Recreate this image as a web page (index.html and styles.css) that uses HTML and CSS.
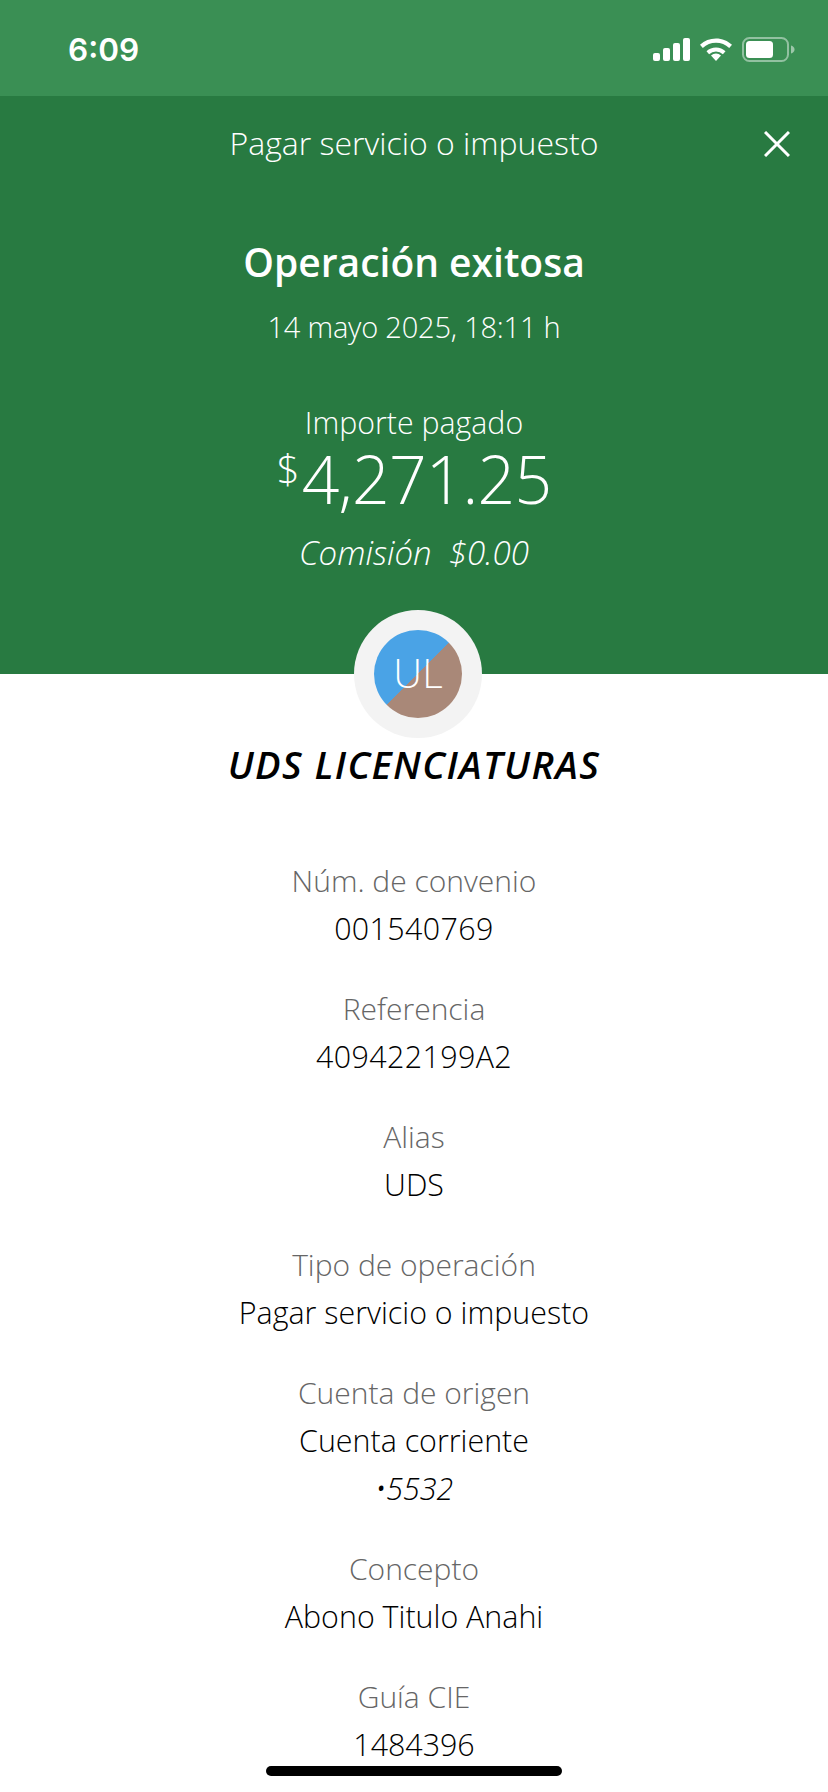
FILE: index.html
```html
<!DOCTYPE html>
<html lang="es">
<head>
<meta charset="utf-8">
<title>Operación exitosa</title>
<link rel="stylesheet" href="styles.css">
</head>
<body>
<div class="page">
  <div class="status">
    <span class="time">6:09</span>
    <div class="status-icons">
      <svg class="ic-signal" width="37" height="23" viewBox="0 0 37 23"><rect x="0" y="15" width="7" height="8" rx="2"/><rect x="10" y="10" width="7" height="13" rx="2"/><rect x="20" y="5" width="7" height="18" rx="2"/><rect x="30" y="0" width="7" height="23" rx="2"/></svg>
      <svg class="ic-wifi" width="32" height="23" viewBox="0 0 32 23"><path d="M16 23l-5-5.6a7.4 7.4 0 0 1 10 0z"/><path d="M16 9.6c3.7 0 7 1.4 9.500 3.700l-2.600 2.900a10.200 10.200 0 0 0-13.800 0l-2.600-2.900A14 14 0 0 1 16 9.600z"/><path d="M16 0.500c6.200 0 11.800 2.400 16 6.300l-2.800 3.100A19.600 19.600 0 0 0 16 4.700 19.600 19.600 0 0 0 2.800 9.900L0 6.800A23.600 23.600 0 0 1 16 0.500z"/></svg>
      <svg class="ic-batt" width="53" height="25" viewBox="0 0 53 25"><rect class="batt-frame" x="1" y="1" width="45" height="23" rx="6.500"/><rect x="4" y="4" width="27" height="17" rx="3.500"/><path class="batt-nub" d="M49 8.500c2 .6 3.500 2 3.500 4s-1.500 3.400-3.500 4z"/></svg>
    </div>
  </div>

  <header class="hero">
    <div class="nav">
      <span class="nav-title">Pagar servicio o impuesto</span>
      <svg class="close" width="26" height="26" viewBox="0 0 26 26"><path d="M1 1l24 24M25 1L1 25"/></svg>
    </div>
    <h1 class="headline">Operación exitosa</h1>
    <p class="date">14 mayo 2025, 18:11 h</p>
    <p class="paid-label">Importe pagado</p>
    <p class="amount"><span class="cur">$</span>4,271.25</p>
    <p class="fee">Comisión&nbsp; $0.00</p>
  </header>

  <div class="avatar">
    <div class="avatar-disc">UL</div>
  </div>
  <h2 class="name">UDS LICENCIATURAS</h2>

  <main class="details">
    <div class="row"><span class="lbl">Núm. de convenio</span><span class="val val-num">001540769</span></div>
    <div class="row"><span class="lbl">Referencia</span><span class="val val-num">409422199A2</span></div>
    <div class="row"><span class="lbl">Alias</span><span class="val">UDS</span></div>
    <div class="row"><span class="lbl">Tipo de operación</span><span class="val">Pagar servicio o impuesto</span></div>
    <div class="row"><span class="lbl">Cuenta de origen</span><span class="val">Cuenta corriente</span><span class="val val-it">•5532</span></div>
    <div class="row"><span class="lbl">Concepto</span><span class="val">Abono Titulo Anahi</span></div>
    <div class="row"><span class="lbl">Guía CIE</span><span class="val">1484396</span></div>
  </main>

  <div class="home-bar"></div>
</div>
</body>
</html>
```
FILE: styles.css
```css
* { box-sizing: border-box; }
html, body { margin: 0; padding: 0; background: #fff; }
.page {
  position: relative;
  width: 828px;
  height: 1792px;
  overflow: hidden;
  font-family: "Open Sans", "Liberation Sans", sans-serif;
  font-weight: 300;
  text-align: center;
  color: #000;
}
p, h1, h2 { margin: 0; font-weight: inherit; }

.status {
  height: 96px;
  background: #3a8f54;
  display: flex;
  align-items: center;
  justify-content: space-between;
  padding: 0 33px 0 68px;
  color: #fff;
}
.time { font-family: Inter, sans-serif; font-size: 31.500px; font-weight: 600; line-height: 1; margin-top: 3px; }
.status-icons { display: flex; align-items: center; gap: 10px; fill: #fff; margin-top: 2px; }
.batt-frame { fill: none; stroke: #fff; stroke-opacity: .45; stroke-width: 2; }
.batt-nub { fill-opacity: .5; }

.hero {
  height: 578px;
  background: #287a41;
  color: #fff;
  overflow: hidden;
}
.nav {
  position: relative;
  height: 96px;
  display: flex;
  align-items: center;
  justify-content: center;
}
.nav-title { font-size: 32px; margin-top: -4px; }
.close {
  position: absolute;
  right: 38px;
  top: 35px;
  fill: none;
  stroke: #fff;
  stroke-width: 3;
}
.headline { margin-top: 46px; font-size: 39px; line-height: 48px; font-weight: 600; }
.date { margin-top: 17px; font-size: 29px; line-height: 48px; letter-spacing: -0.2px; }
.paid-label { margin-top: 48px; font-size: 30.300px; line-height: 48px; }
.amount { font-size: 66px; line-height: 62px; letter-spacing: -0.8px; }
.cur { font-size: 40px; position: relative; top: -20px; margin-right: 3px; }
.fee { margin-top: 9px; font-size: 33px; line-height: 48px; font-style: italic; }

.avatar {
  width: 128px;
  height: 128px;
  margin: -64px 0 0 354px;
  position: relative;
  border-radius: 50%;
  background: #f3f3f3;
  display: flex;
  align-items: center;
  justify-content: center;
}
.avatar-disc {
  width: 88px;
  height: 88px;
  border-radius: 50%;
  background: linear-gradient(135deg, #4aa3e6 50%, #a98878 50%);
  color: #fff;
  font-size: 40px;
  line-height: 86px;
}
.name {
  margin-top: 2px;
  font-size: 38px;
  line-height: 48px;
  font-weight: 550;
  font-style: italic;
  letter-spacing: 1.400px;
}
.details {
  margin-top: 69px;
  display: flex;
  flex-direction: column;
  gap: 32px;
}
.row { display: flex; flex-direction: column; }
.lbl { font-size: 30px; line-height: 48px; color: #666; }
.val { font-size: 30.400px; line-height: 48px; color: #000; }
.val-num { letter-spacing: 0.4px; }
.val-it { font-style: italic; }

.home-bar {
  position: absolute;
  left: 266px;
  top: 1766px;
  width: 296px;
  height: 10px;
  border-radius: 5px;
  background: #000;
}
```
